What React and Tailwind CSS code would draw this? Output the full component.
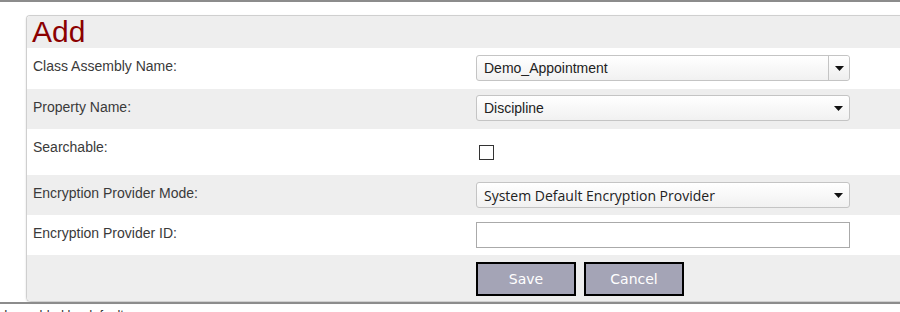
import React from "react";

const Arrow = () => (
  <svg width="9" height="5" viewBox="0 0 9 5"><path d="M0 0h9L4.5 5z" fill="#111" /></svg>
);

function Select({ text, split, font = "font-['Liberation_Sans',Arial,sans-serif] text-[14px]" }) {
  return (
    <div className="w-[374px] h-[26px] rounded-[3px] border border-[#c4c4c4] bg-gradient-to-b from-white to-[#f1f1f1] flex items-center">
      <div className={`flex-1 pl-[7px] text-[#222] ${font}`}>{text}</div>
      {split ? (
        <div className="w-[21px] h-full border-l border-[#c4c4c4] flex items-center justify-center bg-gradient-to-b from-white to-[#eeeeee] rounded-r-[3px]">
          <Arrow />
        </div>
      ) : (
        <div className="w-[21px] h-full flex items-center justify-center">
          <Arrow />
        </div>
      )}
    </div>
  );
}

function Row({ label, bg, h, pt, children }) {
  return (
    <div className={`flex ${bg} ${h}`}>
      <div className="w-[449px] pl-[6px] pt-[8px] text-[14px] text-[#3a3a3a] font-['Liberation_Sans',Arial,sans-serif]">{label}</div>
      <div className={pt}>{children}</div>
    </div>
  );
}

export default function App() {
  return (
    <div className="w-[900px] h-[312px] overflow-hidden bg-white relative">
      <div className="h-[2px] bg-[#8c8c8c]" />
      <div className="ml-[26px] mt-[13px] w-[900px] border-l border-t border-b border-[#cfcfcf] rounded-tl-[4px] rounded-bl-[5px] shadow-[0_1px_2px_rgba(0,0,0,0.15)] overflow-hidden">
        <div className="h-[32px] bg-[#eeeeee] pl-[5px] text-[#8b0000] text-[30px] leading-[32px] font-['Liberation_Sans',Arial,sans-serif]">Add</div>
        <Row label="Class Assembly Name:" bg="bg-white" h="h-[41px]" pt="pt-[7px]">
          <Select text="Demo_Appointment" split />
        </Row>
        <Row label="Property Name:" bg="bg-[#eeeeee]" h="h-[40px]" pt="pt-[6px]">
          <Select text="Discipline" />
        </Row>
        <Row label="Searchable:" bg="bg-white" h="h-[46px]" pt="pt-[16px] pl-[3px]">
          <div className="w-[15px] h-[15px] border border-[#333] bg-white" />
        </Row>
        <Row label="Encryption Provider Mode:" bg="bg-[#eeeeee]" h="h-[40px]" pt="pt-[7px]">
          <Select text="System Default Encryption Provider" font="font-['Open_Sans',sans-serif] text-[14px]" />
        </Row>
        <Row label="Encryption Provider ID:" bg="bg-white" h="h-[40px]" pt="pt-[7px]">
          <div className="w-[374px] h-[26px] border border-[#aaaaaa] bg-white" />
        </Row>
        <div className="flex bg-[#eeeeee] h-[46px]">
          <div className="w-[449px]" />
          <div className="pt-[7px] flex gap-[8px]">
            <button className="w-[100px] h-[34px] border-2 border-black bg-[#a4a4b6] text-white text-[14px] font-['DejaVu_Sans',Verdana,sans-serif]">Save</button>
            <button className="w-[100px] h-[34px] border-2 border-black bg-[#a4a4b6] text-white text-[14px] font-['DejaVu_Sans',Verdana,sans-serif]">Cancel</button>
          </div>
        </div>
      </div>
      <div className="h-[2px] bg-[#8c8c8c]" />
      <div className="pl-[4px] pt-[3px] text-[13px] leading-[16px] text-[#333] font-['Liberation_Sans',Arial,sans-serif]">Is enabled by default</div>
    </div>
  );
}
